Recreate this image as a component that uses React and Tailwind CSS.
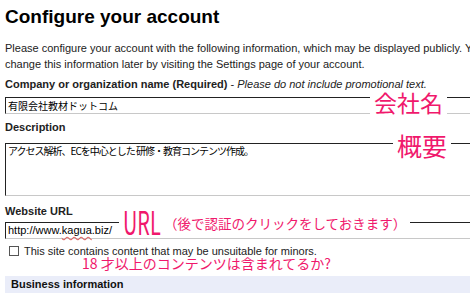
export default function App() {
    const pink = "text-[#f0186c]";
    const jp = { fontFamily: '"Noto Sans CJK JP", sans-serif' };

    return (
        <div
            className="w-[470px] h-[301px] overflow-hidden bg-white text-black pl-[5px]"
            style={{ fontFamily: '"Liberation Sans", Arial, "Noto Sans CJK JP", sans-serif' }}
        >
            <h1 className="text-[19px] font-bold leading-[22px] pt-[6px] whitespace-nowrap">Configure your account</h1>

            <p className="text-[11px] leading-[16px] mt-[12px] whitespace-nowrap text-[#222]">
                Please configure your account with the following information, which may be displayed publicly. You can
                <br />
                change this information later by visiting the Settings page of your account.
            </p>

            {/* company name */}
            <div className="mt-[5px] text-[11px] leading-[14px] whitespace-nowrap text-[#222]">
                <span className="font-bold">Company or organization name (Required)</span> - <i>Please do not include promotional text.</i>
            </div>
            <div className="relative mt-[6px] w-[480px]">
                <div className="h-[17px] border-t border-l border-t-[#222] border-l-[#222] border-b border-b-[#c8c8c8] px-[2px] text-[10px] leading-[15px] whitespace-nowrap" style={jp}>
                    有限会社教材ドットコム
                </div>
                <span className={`absolute left-[365px] top-[-8px] bg-white px-[4px] text-[23px] leading-[26px] ${pink}`} style={jp}>会社名</span>
            </div>

            {/* description */}
            <div className="mt-[6px] text-[11px] leading-[14px] font-bold text-[#222]">Description</div>
            <div className="relative mt-[9px] w-[480px]">
                <div className="h-[53px] border-t border-l border-t-[#222] border-l-[#222] border-b border-b-[#c8c8c8] px-[2px] text-[10px] leading-[13px] tracking-[-1px] whitespace-nowrap" style={jp}>
                    アクセス解析、ECを中心とした 研修・教育コンテンツ作成。
                </div>
                <span className={`absolute left-[388px] top-[-11px] bg-white px-[4px] text-[25px] leading-[26px] ${pink}`} style={jp}>概要</span>
            </div>

            {/* website */}
            <div className="mt-[8px] text-[11px] leading-[14px] font-bold text-[#222]">Website URL</div>
            <div className="relative mt-[4px] w-[480px]">
                <div className="h-[17px] border-t border-l border-t-[#222] border-l-[#222] border-b border-b-[#c8c8c8] px-[2px] text-[11px] leading-[15px] whitespace-nowrap">
                    http://www.<span className="underline decoration-wavy decoration-[#e06060] underline-offset-2" style={{ textDecorationSkipInk: "none" }}>kagua</span>.biz/
                </div>
                <div className={`absolute left-[114px] top-[-17px] flex items-center bg-white px-[4px] whitespace-nowrap ${pink}`} style={jp}>
                    <span className="inline-block w-[38px] h-[32px]">
                        <span className="inline-block text-[32px] leading-[32px] origin-left scale-x-[0.62]">URL</span>
                    </span>
                    <span className="ml-[3px] mt-[3px] text-[13.5px] leading-[20px]">（後で認証のクリックをしておきます）</span>
                </div>
            </div>

            {/* minors */}
            <div className="relative mt-[5px] h-[32px]">
                <div className="flex items-center gap-[5px] pl-[4px] text-[11px] leading-[14px] text-[#222] whitespace-nowrap">
                    <span className="w-[10px] h-[10px] border border-[#555] bg-white"></span>
                    <span>This site contains content that may be unsuitable for minors.</span>
                </div>
                <span className={`absolute left-[77px] top-[11px] text-[14px] leading-[17px] whitespace-nowrap ${pink}`} style={jp}>18 才以上のコンテンツは含まれてるか?</span>
            </div>

            <div className="h-[17px] bg-[#eaedf9] pl-[6px] text-[11px] leading-[17px] font-bold text-[#111]">Business information</div>
        </div>
    );
}
